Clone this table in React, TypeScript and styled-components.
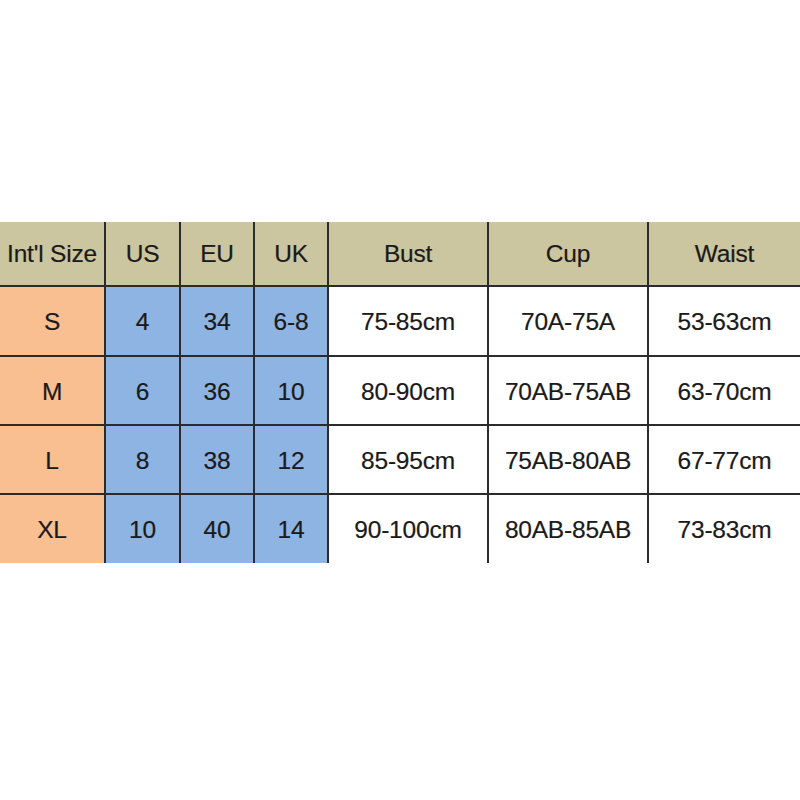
import React from 'react'
import styled, { createGlobalStyle } from 'styled-components'

const GlobalStyle = createGlobalStyle`
  body {
    margin: 0;
    background: #ffffff;
  }
`

type Tone = 'head' | 'size' | 'region' | 'plain'

const tones: Record<Tone, string> = {
  head: '#cbc5a0',
  size: '#f9bf91',
  region: '#8eb4e3',
  plain: '#ffffff',
}

const headers = ["Int'l Size", 'US', 'EU', 'UK', 'Bust', 'Cup', 'Waist']

const rows = [
  ['S', '4', '34', '6-8', '75-85cm', '70A-75A', '53-63cm'],
  ['M', '6', '36', '10', '80-90cm', '70AB-75AB', '63-70cm'],
  ['L', '8', '38', '12', '85-95cm', '75AB-80AB', '67-77cm'],
  ['XL', '10', '40', '14', '90-100cm', '80AB-85AB', '73-83cm'],
]

const toneFor = (col: number): Tone => {
  if (col === 0) return 'size'
  if (col < 4) return 'region'
  return 'plain'
}

export default function App() {
  return (
    <>
      <GlobalStyle />
      <Page>
        <Chart>
          {headers.map((h, i) => (
            <Cell
              key={h}
              $tone='head'
              $lastCol={i === headers.length - 1}
              $lastRow={false}
              $header
            >
              {h}
            </Cell>
          ))}
          {rows.map((row, r) =>
            row.map((value, c) => (
              <Cell
                key={`${r}-${c}`}
                $tone={toneFor(c)}
                $lastCol={c === row.length - 1}
                $lastRow={r === rows.length - 1}
              >
                {value}
              </Cell>
            ))
          )}
        </Chart>
      </Page>
    </>
  )
}

const Page = styled.div`
  width: 800px;
  height: 800px;
  padding-top: 222px;
  box-sizing: border-box;
  font-family: 'Liberation Sans', Arial, sans-serif;
`

const Chart = styled.div`
  display: grid;
  grid-template-columns: 106px 75px 74px 74px 160px 160px 1fr;
  grid-template-rows: 65px 70px 69px 69px 68px;
  width: 800px;
`

const Cell = styled.div<{ $tone: Tone; $lastCol: boolean; $lastRow: boolean; $header?: boolean }>`
  display: flex;
  align-items: center;
  justify-content: center;
  box-sizing: border-box;
  background: ${(p) => tones[p.$tone]};
  border-right: ${(p) => (p.$lastCol ? 'none' : '2px solid #2b2b2b')};
  border-bottom: ${(p) => (p.$lastRow ? 'none' : '2px solid #2b2b2b')};
  color: #1a1a1a;
  font-size: 24.5px;
  letter-spacing: -0.2px;
  white-space: nowrap;
  padding-top: ${(p) => (p.$header ? '0' : '2px')};
  -webkit-text-stroke: 0.2px #1a1a1a;
`
